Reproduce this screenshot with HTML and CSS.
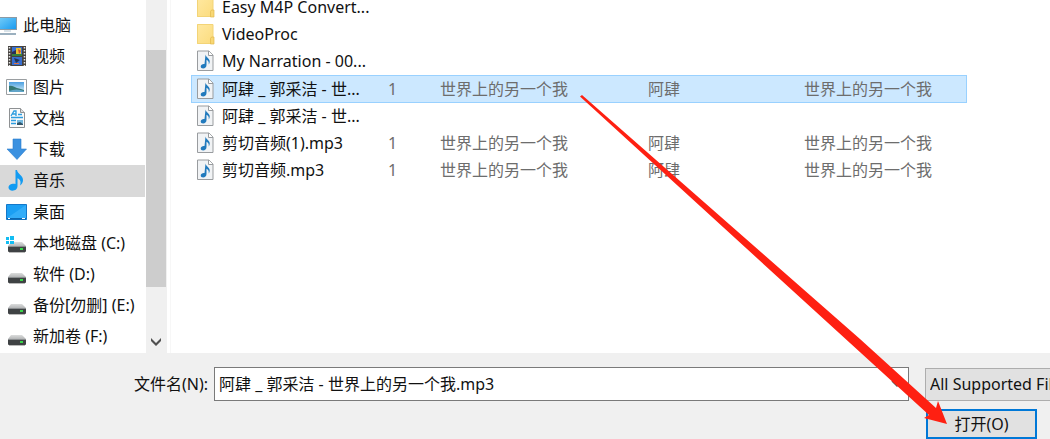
FILE: index.html
```html
<!DOCTYPE html>
<html lang="zh-CN">
<head>
<meta charset="utf-8">
<title>打开</title>
<link rel="stylesheet" href="styles.css">
</head>
<body>
<svg class="defs" aria-hidden="true">
  <defs>
    <linearGradient id="screen" x1="0" y1="0" x2="1" y2="1"><stop offset="0" stop-color="#6fcaf8"/><stop offset="1" stop-color="#1a9bf0"/></linearGradient>
    <linearGradient id="lid" x1="0" y1="0" x2="0" y2="1"><stop offset="0" stop-color="#dcdddd"/><stop offset="1" stop-color="#b4b6b7"/></linearGradient>
    <linearGradient id="folder" x1="0" y1="0" x2="1" y2="1"><stop offset="0" stop-color="#ffe9a2"/><stop offset="1" stop-color="#fbdb7c"/></linearGradient>
    <linearGradient id="sky" x1="0" y1="0" x2="0" y2="1"><stop offset="0" stop-color="#4b9fe0"/><stop offset="1" stop-color="#d9f0f8"/></linearGradient>
    <symbol id="i-drive" viewBox="0 0 22 22">
      <path d="M5 10h11l4 4H2z" fill="url(#lid)"/>
      <rect x="2" y="14" width="18" height="6" rx="1" fill="#3f4244"/>
      <path d="M2 14.500h18" stroke="#8b8e90"/>
      <rect x="14" y="16" width="3" height="2" fill="#38d64a"/>
      <path d="M3 20.500h16" stroke="#b9b9b9"/>
    </symbol>
    <symbol id="i-folder" viewBox="0 0 18 22">
      <path d="M0 1h16v13h1v7H0z" fill="url(#folder)"/>
      <path d="M.5 1.500h15.500v13l-2 1v5H.5z" fill="none" stroke="#f3d477"/>
      <path d="M13.500 21v-5.500l1-1.500h2.500v7z" fill="#f8d773" stroke="#e3b94d" stroke-width=".7"/>
    </symbol>
    <symbol id="i-audio" viewBox="0 0 18 22">
      <path d="M.5 1h11.500l4 4v15.500H.5z" fill="#f1f3f5" stroke="#999c9f"/>
      <path d="M11.500 1v4.500H16" fill="#fff" stroke="#999c9f"/>
      <path d="M8.500 4.500c.3 3 4 3.500 4.200 6.500.1 1.500-.3 2.500-1 3.500.5-2.800-.5-4-2.200-4.800V15c0 2-1.600 3.500-3.400 3.500-1.500 0-2.400-.9-2.400-2 0-1.700 2-2.900 3.800-2.500z" fill="#217abd"/>
    </symbol>
  </defs>
</svg>
<main class="dialog">
  <section class="browser">
    <nav class="places">
      <a class="place root" href="#"><svg class="icon" viewBox="0 0 22 22"><path d="M0 3h17v13H0z" fill="#8b9aa5"/><path d="M0 4h16v11H0z" fill="url(#screen)"/><path d="M4 16h7v2H4z" fill="#d8e2e8"/><path d="M0 19h16v2H0z" fill="#9bb0bf"/></svg>此电脑</a>
      <a class="place" href="#"><svg class="icon" viewBox="0 0 22 22"><path d="M2 1h18v20H2z" fill="#45423f"/><path d="M6 2h10v9H6zM6 12h10v8H6z" fill="#376ed0"/><path d="M3.500 2v19M18.500 2v19" stroke="#e6e6e6" stroke-width="1.500" stroke-dasharray="1.500 1.500"/><path d="M6 7l4-2v4l-4 2z" fill="#2b2e56"/><path d="M10 3h5v6h-5z" fill="#e8bf33"/><path d="M12 4l3 2-2 3z" fill="#d04a2b"/><path d="M6 9h10v2H6z" fill="#36813c"/><path d="M8 13l6 2-4 3z" fill="#273450"/><path d="M8 18h5v1H8z" fill="#db7346"/></svg>视频</a>
      <a class="place" href="#"><svg class="icon" viewBox="0 0 22 22"><path d="M.5 3.500h20v15H.5z" fill="#fff" stroke="#9a9ea1"/><path d="M3 6h15v10H3z" fill="url(#sky)"/><path d="M3 10c3-1 5 1 8 2s5 1 7 2v2H3z" fill="#347873"/><path d="M3 15c5-2 10-2 15 0v1H3z" fill="#62a5c9"/></svg>图片</a>
      <a class="place" href="#"><svg class="icon" viewBox="0 0 22 22"><path d="M3.500 1.500h11l4 4v15h-15z" fill="#fafafa" stroke="#8e9193"/><path d="M14.500 1.500v4h4" fill="#ddd" stroke="#8e9193"/><path d="M5 9l3-5h2v5M6 7h4M12 7.500h4M5 10.500h12M5 13.500h5M5 16.500h5" fill="none" stroke="#2c9de0" stroke-width="1.300"/><path d="M11 13h6v5h-6z" fill="#75b9df"/><path d="M11 16l3-1 3 2v1h-6z" fill="#33566a"/></svg>文档</a>
      <a class="place" href="#"><svg class="icon" viewBox="0 0 22 22"><path d="M7 1h8v10h5.500L11 21.500 1 11h6z" fill="#3b91e0" stroke="#2a7ccc" stroke-width=".6"/></svg>下载</a>
      <a class="place current" href="#" aria-current="page"><svg class="icon" viewBox="0 0 22 22"><path d="M9.500 1H11c.3 4 6 5 6 10 0 2.500-1.200 4.400-3 5.500 1.200-3.500.5-6-2.500-7.200V17c0 2.800-2.200 4.700-5 4.700-2.300 0-4-1.300-4-3.200 0-2.500 3.300-4.200 7-3.500z" fill="#129bf2"/></svg>音乐</a>
      <a class="place" href="#"><svg class="icon" viewBox="0 0 22 22"><path d="M.5 3.500h20v15H.5z" fill="#1b9ff3" stroke="#1478c9"/><path d="M1 17l19-13v13z" fill="#33adf8"/><path d="M1 17h19v1.500H1z" fill="#0c67b0"/><path d="M2 17.500h2M16 17.500h3" stroke="#fff"/></svg>桌面</a>
      <a class="place" href="#"><svg class="icon" viewBox="0 0 22 22"><use href="#i-drive"/><path d="M0 5h3v3H0zM4 4h4v4H4zM0 9h3v3H0zM4 9h4v3H4z" fill="#12bdf3"/></svg>本地磁盘 (C:)</a>
      <a class="place" href="#"><svg class="icon"><use href="#i-drive"/></svg>软件 (D:)</a>
      <a class="place" href="#"><svg class="icon"><use href="#i-drive"/></svg>备份[勿删] (E:)</a>
      <a class="place" href="#"><svg class="icon"><use href="#i-drive"/></svg>新加卷 (F:)</a>
    </nav>
    <div class="scrollbar">
      <div class="thumb"></div>
      <button class="scroll-down" aria-label="向下滚动"><svg viewBox="0 0 12 12"><path d="M1 2l5 5 5-5v3l-5 5-5-5z" fill="#505050"/></svg></button>
    </div>
    <div class="files">
      <table class="file-table">
        <colgroup><col class="c-name"><col class="c-num"><col class="c-title"><col class="c-artist"><col></colgroup>
        <tbody>
        <tr><td class="name"><div class="file"><svg class="file-icon"><use href="#i-folder"/></svg><span>Easy M4P Convert...</span></div></td><td></td><td></td><td></td><td></td></tr>
        <tr><td class="name"><div class="file"><svg class="file-icon"><use href="#i-folder"/></svg><span>VideoProc</span></div></td><td></td><td></td><td></td><td></td></tr>
        <tr><td class="name"><div class="file"><svg class="file-icon"><use href="#i-audio"/></svg><span>My Narration - 00...</span></div></td><td></td><td></td><td></td><td></td></tr>
        <tr class="selected"><td class="name"><div class="file"><svg class="file-icon"><use href="#i-audio"/></svg><span>阿肆 _ 郭采洁 - 世...</span></div></td><td>1</td><td>世界上的另一个我</td><td>阿肆</td><td>世界上的另一个我</td></tr>
        <tr><td class="name"><div class="file"><svg class="file-icon"><use href="#i-audio"/></svg><span>阿肆 _ 郭采洁 - 世...</span></div></td><td></td><td></td><td></td><td></td></tr>
        <tr><td class="name"><div class="file"><svg class="file-icon"><use href="#i-audio"/></svg><span>剪切音频(1).mp3</span></div></td><td>1</td><td>世界上的另一个我</td><td>阿肆</td><td>世界上的另一个我</td></tr>
        <tr><td class="name"><div class="file"><svg class="file-icon"><use href="#i-audio"/></svg><span>剪切音频.mp3</span></div></td><td>1</td><td>世界上的另一个我</td><td>阿肆</td><td>世界上的另一个我</td></tr>
        </tbody>
      </table>
    </div>
  </section>
  <form class="footer">
    <div class="fields">
      <label class="field-label" for="filename">文件名(N):</label>
      <div class="combo">
        <input class="filename" id="filename" type="text" value="阿肆 _ 郭采洁 - 世界上的另一个我.mp3">
        <svg class="chevron" viewBox="0 0 12 12"><path d="M1 3l5 5 5-5" fill="none" stroke="#555" stroke-width="1.500"/></svg>
      </div>
      <div class="filter-slot">
        <select class="filter" aria-label="文件类型"><option>All Supported Files</option></select>
      </div>
    </div>
    <div class="actions"><button class="open" type="button">打开(O)</button></div>
  </form>
  <svg class="pointer" viewBox="0 0 368 330" aria-hidden="true"><path d="M0 1.500L2 0 280 244 356 313 358 306 367 329 344 323 349 320 270 248Z" fill="#fe2012"/></svg>
</main>
</body>
</html>
```
FILE: styles.css
```css
* { box-sizing: border-box; }
body {
  margin: 0;
  background: #f0f0f0;
  color: #111;
  font: 16px/24px "Noto Sans", "Noto Sans CJK SC", sans-serif;
}
input, select, button { font: inherit; color: inherit; margin: 0; }
.defs { position: absolute; width: 0; height: 0; }
.dialog { position: relative; overflow: hidden; }
.browser { display: flex; background: #fff; }

.places { width: 146px; padding: 10px 1px 1px 0; flex: none; }
.place {
  display: flex;
  align-items: center;
  gap: 5px;
  height: 31px;
  padding: 0 0 2px 6px;
  color: inherit;
  text-decoration: none;
  white-space: nowrap;
}
.place.root { padding-left: 0; gap: 1px; }
.place.current { height: 32px; background: #d9d9d9; }
.icon { width: 22px; height: 22px; flex: none; }

.scrollbar {
  display: flex;
  flex-direction: column;
  width: 21px;
  padding: 50px 1px 0 0;
  background: #f0f0f0;
  flex: none;
}
.thumb { flex: 1; background: #cdcdcd; }
.scroll-down {
  display: flex;
  align-items: flex-end;
  justify-content: center;
  height: 66px;
  padding: 0 0 5px;
  border: 0;
  background: none;
}
.scroll-down svg { width: 12px; height: 12px; }

.files {
  flex: 1;
  min-width: 0;
  margin-left: 3px;
  padding: 0 83px 0 20px;
  border-left: 1px solid #f7f7f7;
  overflow: hidden;
}
.file-table {
  width: 100%;
  margin-top: -6px;
  table-layout: fixed;
  border-collapse: separate;
  border-spacing: 0;
}
.c-name { width: 197px; }
.c-num { width: 52px; }
.c-title { width: 208px; }
.c-artist { width: 156px; }
.file-table td { height: 27px; padding: 0 0 2px; color: #6d6d6d; white-space: nowrap; }
.file-table .name { padding-left: 6px; color: #111; }
.file { display: flex; align-items: center; gap: 7px; }
.file-icon { width: 18px; height: 22px; flex: none; }
.file-table .selected td {
  height: 28px;
  padding-bottom: 0;
  background: #cce8ff;
  border: 1px solid #99d1ff;
  border-width: 1px 0;
}
.file-table .selected td:first-child { border-left-width: 1px; padding-left: 5px; }
.file-table .selected td:last-child { border-right-width: 1px; }

.footer { padding: 14px 0 0; }
.fields { display: flex; align-items: center; }
.field-label { width: 214px; padding-right: 6px; text-align: right; }
.combo {
  display: flex;
  align-items: center;
  flex: 1;
  height: 34px;
  padding-right: 5px;
  border: 1px solid #7a7a7a;
  background: #fff;
}
.filename { flex: 1; min-width: 0; padding: 0 4px; border: 0; background: none; outline: 0; }
.chevron { width: 12px; height: 12px; }
.filter-slot { width: 141px; padding-left: 16px; overflow: hidden; }
.filter {
  display: block;
  width: 240px;
  height: 33px;
  padding: 0 4px;
  border: 1px solid #adadad;
  border-radius: 0;
  background: #e1e1e1;
  appearance: none;
}
.actions { display: flex; justify-content: flex-end; padding: 8px 13px 0; }
.open {
  width: 111px;
  height: 30px;
  padding: 0;
  border: 2px solid #0078d7;
  background: #e1e1e1;
}
.pointer { position: absolute; left: 580px; top: 95px; width: 368px; height: 330px; }
```
